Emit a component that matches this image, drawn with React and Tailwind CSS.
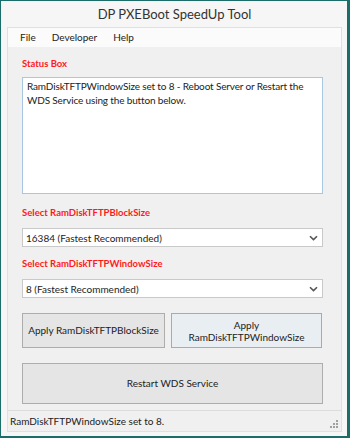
import React from "react";

function Chevron() {
  return (
    <svg width="9" height="6" viewBox="0 0 9 6" className="shrink-0">
      <path d="M1 1.2 L4.5 4.6 L8 1.2" fill="none" stroke="#555" strokeWidth="1.6" />
    </svg>
  );
}

function Combo({ text }) {
  return (
    <div className="h-[19px] w-[301px] bg-white border border-[#c9c9c9] flex items-center pl-[3px] pr-[4px] text-[10px] text-[#222]">
      <span className="flex-1 leading-none">{text}</span>
      <Chevron />
    </div>
  );
}

export default function App() {
  const font = { fontFamily: 'Lato, "Open Sans", sans-serif' };
  return (
    <div style={font} className="w-[350px] h-[438px] bg-[#1b6d69] pt-[1px] pl-[1px] pr-[3px] pb-[2px]">
      <div className="w-full h-full bg-[#f6f6f6] flex flex-col pl-[6px] pr-[5px] pb-[4px]">
        <div className="h-[26px] flex items-center justify-center text-[13px] text-[#333] pt-[1px]">
          DP PXEBoot SpeedUp Tool
        </div>
        <div className="flex-1 border border-[#e0e0e0] bg-[#f0f0f0] flex flex-col">
          <div className="h-[19px] bg-[#fbfbfb] flex items-center text-[10px] text-[#222]">
            <span className="ml-[12px]">File</span>
            <span className="ml-[16px]">Developer</span>
            <span className="ml-[16px]">Help</span>
          </div>
          <div className="flex flex-col pl-[14px]">
            <div className="mt-[10px] text-[9.5px] font-bold text-[#ff1a1a] leading-[14px]">Status Box</div>
            <div className="mt-[6px] w-[301px] h-[117px] bg-white border border-[#a9c7e2] pl-[4px] pr-[2px] pt-[2px] text-[10px] leading-[13.5px] tracking-[-0.15px] text-[#222] whitespace-nowrap overflow-hidden">
              RamDiskTFTPWindowSize set to 8 - Reboot Server or Restart the
              <br />
              WDS Service using the button below.
            </div>
            <div className="mt-[12px] text-[9.5px] font-bold text-[#ff1a1a] leading-[14px]">Select RamDiskTFTPBlockSize</div>
            <div className="mt-[8px]">
              <Combo text="16384 (Fastest Recommended)" />
            </div>
            <div className="mt-[10px] text-[9.5px] font-bold text-[#ff1a1a] leading-[14px]">Select RamDiskTFTPWindowSize</div>
            <div className="mt-[8px]">
              <Combo text="8 (Fastest Recommended)" />
            </div>
            <div className="mt-[15px] flex gap-[6px]">
              <div className="w-[143px] h-[35px] border border-[#adadad] bg-[#e5e5e5] flex items-center justify-center text-[10px] text-[#222] whitespace-nowrap">
                Apply RamDiskTFTPBlockSize
              </div>
              <div className="w-[151px] h-[35px] border border-[#7eb4ea] bg-[#e9eef3] flex items-center justify-center text-center text-[10px] leading-[12px] text-[#222]">
                Apply<br />RamDiskTFTPWindowSize
              </div>
            </div>
            <div className="mt-[15px] w-[301px] h-[41px] border border-[#adadad] bg-[#e5e5e5] flex items-center justify-center text-[10px] text-[#222]">
              Restart WDS Service
            </div>
          </div>
          <div className="mt-auto h-[21px] border-t border-[#dcdcdc] flex items-center pl-[2px] relative text-[10px] text-[#222]">
            RamDiskTFTPWindowSize set to 8.
            <svg width="10" height="10" viewBox="0 0 10 10" className="absolute right-[2px] bottom-[2px]">
              <rect x="7" y="1" width="2" height="2" fill="#a0a0a0" />
              <rect x="4" y="4" width="2" height="2" fill="#a0a0a0" />
              <rect x="7" y="4" width="2" height="2" fill="#a0a0a0" />
              <rect x="1" y="7" width="2" height="2" fill="#a0a0a0" />
              <rect x="4" y="7" width="2" height="2" fill="#a0a0a0" />
              <rect x="7" y="7" width="2" height="2" fill="#a0a0a0" />
            </svg>
          </div>
        </div>
      </div>
    </div>
  );
}
